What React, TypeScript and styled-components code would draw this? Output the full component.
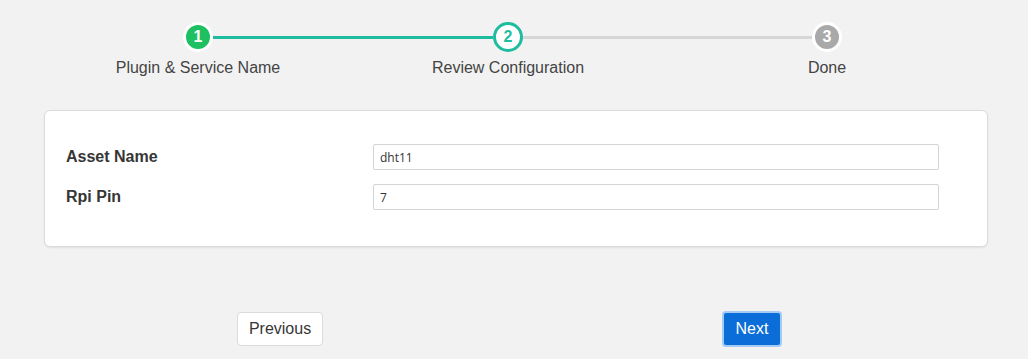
import React from 'react';
import styled, {createGlobalStyle} from "styled-components";

const GlobalStyle = createGlobalStyle`
  html, body {
    margin: 0;
    padding: 0;
    background-color: #f2f2f2;
    font-family: "Liberation Sans", Arial, sans-serif;
    color: #444;
  }
`;

const Page = styled.div`
  padding: 22px 40px 0 40px;
  height: 359px;
  box-sizing: border-box;
`;

const Stepper = styled.div`
  display: grid;
  grid-template-columns: 316px 304px 334px;
`;

const Step = styled.div`
  display: flex;
  flex-direction: column;
  align-items: center;
`;

const Track = styled.div`
  display: flex;
  align-items: center;
  width: 100%;
  height: 30px;
`;

const Line = styled.div<{ color: string }>`
  flex: 1;
  height: 3px;
  background-color: ${props => props.color};
`;

const Circle = styled.div<{ state: "done" | "active" | "todo" }>`
  width: 30px;
  height: 30px;
  box-sizing: border-box;
  border-radius: 50%;
  display: flex;
  justify-content: center;
  align-items: center;
  font-size: 16px;
  font-weight: bold;
  border: 3px solid ${props => props.state === "active" ? "#1fbc9f" : "#ffffff"};
  background-color: ${props => props.state === "done" ? "#1fc062" : props.state === "active" ? "#ffffff" : "#a9a9a9"};
  color: ${props => props.state === "active" ? "#1fbc9f" : "#ffffff"};
`;

const StepLabel = styled.div`
  margin-top: 6px;
  font-size: 16px;
  line-height: 19px;
  color: #444;
`;

const Card = styled.div`
  margin: 33px 0 0 4px;
  width: 944px;
  box-sizing: border-box;
  background-color: #fff;
  border: 1px solid #dcdcdc;
  border-radius: 6px;
  box-shadow: 0 1px 2px rgba(0, 0, 0, 0.08);
  padding: 33px 48px 36px 21px;
  display: flex;
  flex-direction: column;
  gap: 14px;
`;

const Field = styled.div`
  display: grid;
  grid-template-columns: 307px 1fr;
  align-items: center;
`;

const FieldLabel = styled.label`
  font-size: 16px;
  font-weight: bold;
  color: #363636;
`;

const Input = styled.input`
  height: 26px;
  box-sizing: border-box;
  border: 1px solid #d4d4d4;
  border-radius: 2px;
  padding: 0 6px;
  font-family: "Open Sans", "Liberation Sans", sans-serif;
  font-size: 12px;
  color: #333;
  background: #fff;
  outline: none;
`;

const Actions = styled.div`
  margin: 64px 0 0 4px;
  width: 944px;
  display: grid;
  grid-template-columns: 1fr 1fr;
  justify-items: center;
  align-items: center;
`;

const Button = styled.button<{ primary?: boolean }>`
  height: ${props => props.primary ? "36px" : "34px"};
  padding: 0 ${props => props.primary ? "12px" : "11px"};
  font-family: "Liberation Sans", Arial, sans-serif;
  font-size: 16px;
  border-radius: 4px;
  cursor: pointer;
  border: ${props => props.primary ? "2px solid #a3cbf4" : "1px solid #dbdbdb"};
  background-color: ${props => props.primary ? "#0b6dd7" : "#ffffff"};
  color: ${props => props.primary ? "#ffffff" : "#363636"};
`;

const steps = [
    {n: 1, label: "Plugin & Service Name", state: "done" as const},
    {n: 2, label: "Review Configuration", state: "active" as const},
    {n: 3, label: "Done", state: "todo" as const},
];

const TEAL = "#1fbc9f";
const GREY = "#d6d6d6";

function App() {
    const leftColor = (i: number) => i === 0 ? "transparent" : i <= 1 ? TEAL : GREY;
    const rightColor = (i: number) => i === steps.length - 1 ? "transparent" : i < 1 ? TEAL : GREY;
    return (
        <>
            <GlobalStyle/>
            <Page>
                <Stepper>
                    {steps.map((step, i) =>
                        <Step key={step.n}>
                            <Track>
                                <Line color={leftColor(i)}/>
                                <Circle state={step.state}>{step.n}</Circle>
                                <Line color={rightColor(i)}/>
                            </Track>
                            <StepLabel>{step.label}</StepLabel>
                        </Step>
                    )}
                </Stepper>
                <Card>
                    <Field>
                        <FieldLabel>Asset Name</FieldLabel>
                        <Input defaultValue="dht11"/>
                    </Field>
                    <Field>
                        <FieldLabel>Rpi Pin</FieldLabel>
                        <Input defaultValue="7"/>
                    </Field>
                </Card>
                <Actions>
                    <Button>Previous</Button>
                    <Button primary>Next</Button>
                </Actions>
            </Page>
        </>
    );
}

export default App;
